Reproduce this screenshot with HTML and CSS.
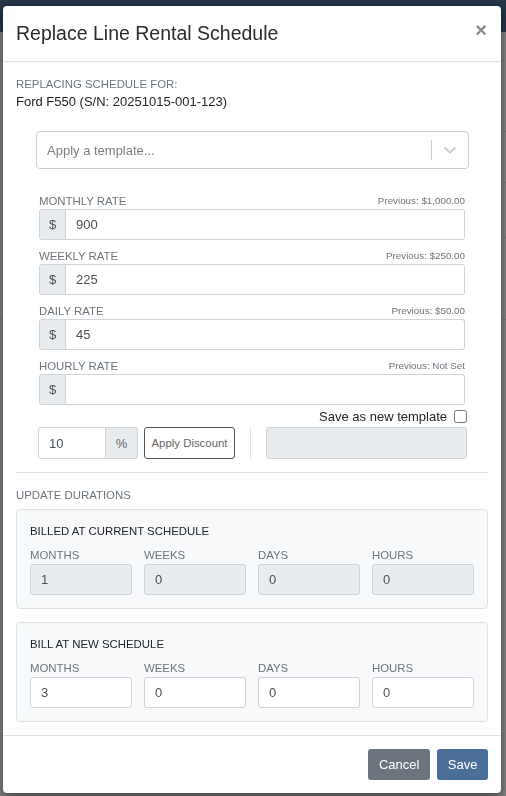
FILE: index.html
```html
<!DOCTYPE html>
<html>
<head>
  <title>Rentals</title>
  <link rel="stylesheet" href="styles.css">
</head>
<body>
  <div class="page">
    <div class="navbar"></div>
    <div class="page-rows">
      <div class="page-row first"></div>
      <div class="page-row"></div>
      <div class="page-row mid"></div>
      <div class="page-row wide"></div>
    </div>
  </div>

  <div class="backdrop"></div>

  <div class="modal">
    <div class="modal-header">
      <h2>Replace Line Rental Schedule</h2>
      <span class="close">&times;</span>
    </div>

    <div class="modal-body">
      <div class="small-caps">Replacing schedule for:</div>
      <div class="asset-name">Ford F550 (S/N: 20251015-001-123)</div>

      <div class="template-select">
        <span class="placeholder">Apply a template...</span>
        <span class="separator"></span>
        <svg class="chevron" width="20" height="20" viewBox="0 0 20 20">
          <path d="M4.5 7.5 L10 12.5 L15.5 7.5" fill="none" stroke="#ccc" stroke-width="2" />
        </svg>
      </div>

      <div class="rates">
        <div class="rate">
          <div class="rate-head"><span class="rate-label">Monthly Rate</span><span class="prev">Previous: $1,000.00</span></div>
          <div class="input-group"><span class="addon">$</span><input type="text" value="900"></div>
        </div>
        <div class="rate">
          <div class="rate-head"><span class="rate-label">Weekly Rate</span><span class="prev">Previous: $250.00</span></div>
          <div class="input-group"><span class="addon">$</span><input type="text" value="225"></div>
        </div>
        <div class="rate">
          <div class="rate-head"><span class="rate-label">Daily Rate</span><span class="prev">Previous: $50.00</span></div>
          <div class="input-group"><span class="addon">$</span><input type="text" value="45"></div>
        </div>
        <div class="rate last">
          <div class="rate-head"><span class="rate-label">Hourly Rate</span><span class="prev">Previous: Not Set</span></div>
          <div class="input-group"><span class="addon">$</span><input type="text" value=""></div>
        </div>
      </div>

      <div class="tools">
        <label class="save-template">Save as new template <input type="checkbox"></label>
        <div class="discount-row">
          <div class="discount-group">
            <input type="text" value="10">
            <span class="addon pct">%</span>
          </div>
          <button class="btn-outline">Apply Discount</button>
          <span class="vline"></span>
          <input type="text" class="template-name" disabled>
        </div>
      </div>

      <hr>

      <div class="small-caps">Update Durations</div>

      <div class="card">
        <div class="card-title">Billed at current schedule</div>
        <div class="duration-grid">
          <div class="field"><span class="field-label">Months</span><input type="text" value="1" disabled></div>
          <div class="field"><span class="field-label">Weeks</span><input type="text" value="0" disabled></div>
          <div class="field"><span class="field-label">Days</span><input type="text" value="0" disabled></div>
          <div class="field"><span class="field-label">Hours</span><input type="text" value="0" disabled></div>
        </div>
      </div>

      <div class="card">
        <div class="card-title">Bill at new schedule</div>
        <div class="duration-grid">
          <div class="field"><span class="field-label">Months</span><input type="text" value="3"></div>
          <div class="field"><span class="field-label">Weeks</span><input type="text" value="0"></div>
          <div class="field"><span class="field-label">Days</span><input type="text" value="0"></div>
          <div class="field"><span class="field-label">Hours</span><input type="text" value="0"></div>
        </div>
      </div>
    </div>

    <div class="modal-footer">
      <button class="btn btn-cancel">Cancel</button>
      <button class="btn btn-save">Save</button>
    </div>
  </div>
</body>
</html>
```

FILE: styles.css
```css
* {
  box-sizing: border-box;
}

body {
  margin: 0;
  font-family: "Liberation Sans", Arial, sans-serif;
  background-color: #fff;
  color: #212529;
}

/* page behind the modal */
.navbar {
  height: 32px;
  background-color: #4a6a8f;
}

.page-row {
  height: 51px;
  border-bottom: 1px solid #e0e0e0;
}

.page-row.first {
  height: 100px;
}

.page-row.mid {
  height: 55px;
}

.page-row.wide {
  height: 82px;
}

.backdrop {
  position: fixed;
  top: 0;
  left: 0;
  right: 0;
  bottom: 0;
  background-color: rgba(0, 0, 0, 0.5);
}

/* modal */
.modal {
  position: absolute;
  top: 6px;
  left: 3px;
  width: 498px;
  background-color: #fff;
  border-radius: 4px;
  box-shadow: 0 3px 9px rgba(0, 0, 0, 0.5);
}

.modal-header {
  display: flex;
  justify-content: space-between;
  align-items: flex-start;
  padding: 12px 13px 13px;
  border-bottom: 1px solid #e2e2e2;
}

.modal-header h2 {
  margin: 0;
  font-size: 19.5px;
  font-weight: normal;
  line-height: 30px;
  color: #2b2b2b;
}

.close {
  font-size: 20px;
  font-weight: bold;
  line-height: 20px;
  color: #8a8a8a;
  margin-top: 2px;
  margin-right: 1px;
}

.modal-body {
  padding: 14px 13px 13px;
}

.small-caps {
  font-size: 11.4px;
  line-height: 16px;
  text-transform: uppercase;
  color: #6c757d;
}

.asset-name {
  font-size: 13px;
  line-height: 16px;
  margin-top: 2px;
}

.template-select {
  display: flex;
  align-items: center;
  height: 38px;
  margin: 21px 19px 0 20px;
  border: 1px solid #ccc;
  border-radius: 4px;
  padding-left: 10px;
}

.placeholder {
  flex: 1;
  font-size: 13px;
  color: #808080;
}

.separator {
  width: 1px;
  height: 20px;
  background-color: #ccc;
}

.chevron {
  margin: 0 8px;
}

.rates {
  margin: 24px 23px 0;
}

.rate {
  margin-bottom: 8px;
}

.rate.last {
  margin-bottom: 3px;
}

.rate-head {
  display: flex;
  justify-content: space-between;
  align-items: center;
  height: 15px;
  margin-bottom: 1px;
}

.rate-label {
  font-size: 11.4px;
  text-transform: uppercase;
  color: #6c757d;
}

.prev {
  font-size: 9.8px;
  color: #6c757d;
}

.input-group {
  display: flex;
  height: 31px;
}

.addon {
  display: flex;
  align-items: center;
  justify-content: center;
  width: 27px;
  background-color: #e9ecef;
  border: 1px solid #ced4da;
  border-radius: 3px 0 0 3px;
  font-size: 13px;
  color: #495057;
}

input[type="text"] {
  font-family: "Liberation Sans", Arial, sans-serif;
  font-size: 13px;
  color: #495057;
  border: 1px solid #ced4da;
  border-radius: 3px;
  padding: 0 10px;
  height: 31px;
  background-color: #fff;
  outline: none;
}

.input-group input {
  flex: 1;
  min-width: 0;
  border-left: none;
  border-radius: 0 3px 3px 0;
}

.tools {
  margin: 0 21px 0 22px;
}

.save-template {
  display: flex;
  justify-content: flex-end;
  align-items: center;
  height: 16px;
  font-size: 13px;
  color: #212529;
}

.save-template input {
  width: 13px;
  height: 13px;
  margin: 0 0 0 7px;
}

.discount-row {
  display: flex;
  align-items: center;
  margin-top: 3px;
  height: 32px;
}

.discount-group {
  display: flex;
  height: 32px;
}

.discount-group input {
  width: 68px;
  height: 32px;
  border-radius: 3px 0 0 3px;
}

.addon.pct {
  width: 32px;
  border-left: none;
  border-radius: 0 3px 3px 0;
  color: #666;
}

.btn-outline {
  margin-left: 6px;
  width: 91px;
  height: 32px;
  padding: 0;
  font-family: "Liberation Sans", Arial, sans-serif;
  font-size: 11.4px;
  color: #666;
  background-color: #fff;
  border: 1px solid #555;
  border-radius: 3px;
}

.vline {
  width: 1px;
  height: 31px;
  margin: 0 15px;
  background-color: #dee2e6;
}

.template-name {
  flex: 1;
  min-width: 0;
  height: 32px !important;
}

input[disabled] {
  background-color: #e9ecef;
}

hr {
  border: none;
  border-top: 1px solid #dee2e6;
  margin: 13px 0 14px;
}

.card {
  margin-top: 6px;
  padding: 13px 13px 13px;
  background-color: #f8f9fa;
  border: 1px solid #dee2e6;
  border-radius: 4px;
}

.card + .card {
  margin-top: 13px;
}

.card-title {
  font-size: 11.4px;
  line-height: 16px;
  text-transform: uppercase;
  color: #212529;
}

.duration-grid {
  display: grid;
  grid-template-columns: repeat(4, 1fr);
  column-gap: 12px;
  margin-top: 9px;
}

.field {
  display: flex;
  flex-direction: column;
}

.field-label {
  font-size: 11.4px;
  line-height: 14px;
  text-transform: uppercase;
  color: #6c757d;
  margin-bottom: 2px;
}

.field input {
  width: 100%;
}

.modal-footer {
  display: flex;
  justify-content: flex-end;
  gap: 7px;
  padding: 13px;
  border-top: 1px solid #e2e2e2;
}

.btn {
  height: 31px;
  padding: 0 11px;
  font-family: "Liberation Sans", Arial, sans-serif;
  font-size: 13px;
  color: #fff;
  border: none;
  border-radius: 3px;
}

.btn-cancel {
  background-color: #6c757d;
}

.btn-save {
  padding: 0 10.5px;
  background-color: #4b6f96;
}
```
